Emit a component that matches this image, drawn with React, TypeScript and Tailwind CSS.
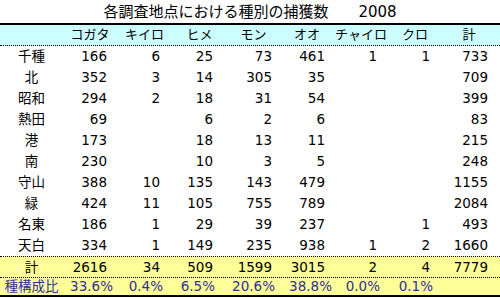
const cols = [
  { w: "w-[54px]", pr: "pr-[10px]", ppr: "pr-[4px]" },
  { w: "w-[55px]", pr: "pr-[12px]", ppr: "pr-[9px]" },
  { w: "w-[55px]", pr: "pr-[14px]", ppr: "pr-[12px]" },
  { w: "w-[53px]", pr: "pr-[8px]", ppr: "pr-[5px]" },
  { w: "w-[54px]", pr: "pr-[9px]", ppr: "pr-[2px]" },
  { w: "w-[54px]", pr: "pr-[11px]", ppr: "pr-[8px]" },
  { w: "w-[54px]", pr: "pr-[12px]", ppr: "pr-[9px]" },
  { w: "w-[54px]", pr: "pr-[8px]", ppr: "pr-[8px]" },
];

const heads = ["コガタ", "キイロ", "ヒメ", "モン", "オオ", "チャイロ", "クロ", "計"];

const rows: [string, (number | null)[]][] = [
  ["千種", [166, 6, 25, 73, 461, 1, 1, 733]],
  ["北", [352, 3, 14, 305, 35, null, null, 709]],
  ["昭和", [294, 2, 18, 31, 54, null, null, 399]],
  ["熱田", [69, null, 6, 2, 6, null, null, 83]],
  ["港", [173, null, 18, 13, 11, null, null, 215]],
  ["南", [230, null, 10, 3, 5, null, null, 248]],
  ["守山", [388, 10, 135, 143, 479, null, null, 1155]],
  ["緑", [424, 11, 105, 755, 789, null, null, 2084]],
  ["名東", [186, 1, 29, 39, 237, null, 1, 493]],
  ["天白", [334, 1, 149, 235, 938, 1, 2, 1660]],
];

const total = [2616, 34, 509, 1599, 3015, 2, 4, 7779];
const ratio = ["33.6%", "0.4%", "6.5%", "20.6%", "38.8%", "0.0%", "0.1%", ""];

export default function App() {
  return (
    <div
      className="w-[500px] h-[299px] bg-white text-black text-[13.5px] overflow-hidden"
      style={{ fontFamily: '"DejaVu Sans", "Noto Sans CJK JP", sans-serif' }}
    >
      <div className="h-[23px] flex items-center justify-center text-[15px] leading-none pt-[1px]">
        <span>各調査地点における種別の捕獲数</span>
        <span className="ml-[30px]">2008</span>
      </div>
      <div className="border-t-2 border-black">
        <div className="flex h-[21px] items-center bg-[#ccffff] border-b border-dotted border-black text-[13px]">
          <div className="w-[63px]" />
          {heads.map((h, i) => (
            <div key={h} className={`${cols[i].w} text-center`}>
              {h}
            </div>
          ))}
        </div>
        {rows.map(([name, vals]) => (
          <div key={name} className="flex h-[21px] items-center">
            <div className="w-[63px] text-center">{name}</div>
            {vals.map((v, i) => (
              <div key={i} className={`${cols[i].w} ${cols[i].pr} text-right`}>
                {v ?? ""}
              </div>
            ))}
          </div>
        ))}
        <div className="flex h-[22px] items-center bg-[#ffff99] border-t border-b border-dotted border-black">
          <div className="w-[63px] text-center">計</div>
          {total.map((v, i) => (
            <div key={i} className={`${cols[i].w} ${cols[i].pr} text-right`}>
              {v}
            </div>
          ))}
        </div>
        <div className="flex h-[19px] items-center bg-[#ffff99] border-b-2 border-black text-[#2e2e99]">
          <div className="w-[63px] text-center">種構成比</div>
          {ratio.map((v, i) => (
            <div key={i} className={`${cols[i].w} ${cols[i].ppr} text-right`}>
              {v}
            </div>
          ))}
        </div>
      </div>
    </div>
  );
}
